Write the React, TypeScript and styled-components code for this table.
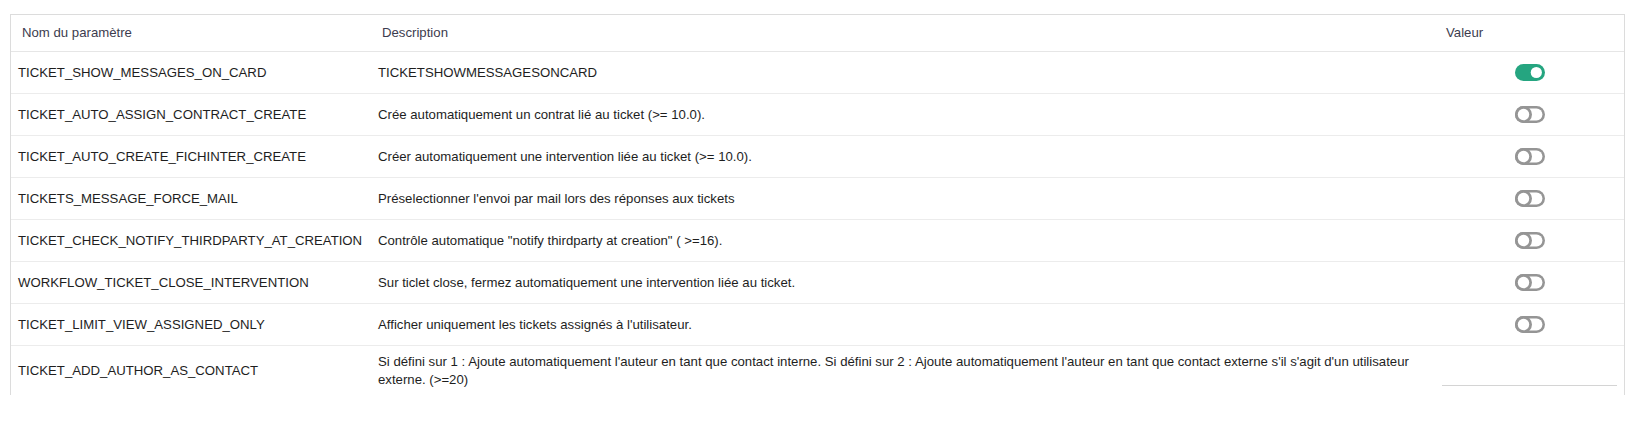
import React from "react";
import styled, { createGlobalStyle } from "styled-components";

const GlobalStyle = createGlobalStyle`
  html, body {
    margin: 0;
    padding: 0;
    background: #ffffff;
  }
  body {
    font-family: "Liberation Sans", Arial, sans-serif;
  }
`;

const Page = styled.div`
  padding: 14px 8px 0 10px;
`;

const TableFrame = styled.div`
  height: 381px;
  overflow: hidden;
  border: 1px solid #dcdcdc;
  border-bottom: none;
  box-sizing: border-box;
`;

const Row = styled.div<{ $head?: boolean }>`
  display: grid;
  grid-template-columns: 360px 1fr 189px;
  align-items: center;
  min-height: ${(p) => (p.$head ? "36px" : "41px")};
  border-bottom: 1px solid ${(p) => (p.$head ? "#e6e6e6" : "#ececec")};

  &:last-child {
    border-bottom: none;
  }
`;

const HeadCell = styled.div`
  padding: 0 11px;
  font-size: 13.2px;
  line-height: 18px;
  color: #3c3c4e;
`;

const Cell = styled.div<{ $center?: boolean }>`
  padding: 0 7px;
  font-size: 13.2px;
  line-height: 18px;
  color: #1e1e1e;
  display: ${(p) => (p.$center ? "flex" : "block")};
  justify-content: ${(p) => (p.$center ? "center" : "flex-start")};
  align-items: center;
`;

const TallCell = styled(Cell)`
  padding-top: 10px;
  padding-bottom: 10px;
`;

const ValueInput = styled.input`
  box-sizing: border-box;
  width: 100%;
  height: 30px;
  border: none;
  border-bottom: 1px solid #d4d4d4;
  background: transparent;
  outline: none;
  font-family: inherit;
  font-size: 13.2px;
`;

const ToggleSvg = styled.svg`
  display: block;
  width: 30px;
  height: 17px;
  cursor: pointer;
`;

const Toggle: React.FC<{ on: boolean }> = ({ on }) =>
  on ? (
    <ToggleSvg viewBox="0 0 30 17">
      <rect x="0" y="0" width="30" height="17" rx="8.5" fill="#25a580" />
      <circle cx="21.3" cy="8.5" r="5.6" fill="#ffffff" />
    </ToggleSvg>
  ) : (
    <ToggleSvg viewBox="0 0 30 17">
      <rect x="0" y="0" width="30" height="17" rx="8.5" fill="#959595" />
      <rect x="2.6" y="2.6" width="24.8" height="11.8" rx="5.9" fill="#ffffff" />
      <circle cx="8.5" cy="8.5" r="8.5" fill="#959595" />
      <circle cx="8.5" cy="8.5" r="5.7" fill="#ffffff" />
    </ToggleSvg>
  );

type Param = { name: string; desc: string; value: "on" | "off" | "input" };

const params: Param[] = [
  { name: "TICKET_SHOW_MESSAGES_ON_CARD", desc: "TICKETSHOWMESSAGESONCARD", value: "on" },
  { name: "TICKET_AUTO_ASSIGN_CONTRACT_CREATE", desc: "Crée automatiquement un contrat lié au ticket (>= 10.0).", value: "off" },
  { name: "TICKET_AUTO_CREATE_FICHINTER_CREATE", desc: "Créer automatiquement une intervention liée au ticket (>= 10.0).", value: "off" },
  { name: "TICKETS_MESSAGE_FORCE_MAIL", desc: "Préselectionner l'envoi par mail lors des réponses aux tickets", value: "off" },
  { name: "TICKET_CHECK_NOTIFY_THIRDPARTY_AT_CREATION", desc: "Contrôle automatique \"notify thirdparty at creation\" ( >=16).", value: "off" },
  { name: "WORKFLOW_TICKET_CLOSE_INTERVENTION", desc: "Sur ticlet close, fermez automatiquement une intervention liée au ticket.", value: "off" },
  { name: "TICKET_LIMIT_VIEW_ASSIGNED_ONLY", desc: "Afficher uniquement les tickets assignés à l'utilisateur.", value: "off" },
  {
    name: "TICKET_ADD_AUTHOR_AS_CONTACT",
    desc: "Si défini sur 1 : Ajoute automatiquement l'auteur en tant que contact interne. Si défini sur 2 : Ajoute automatiquement l'auteur en tant que contact externe s'il s'agit d'un utilisateur externe. (>=20)",
    value: "input",
  },
];

export default function App() {
  return (
    <Page>
      <GlobalStyle />
      <TableFrame>
        <Row $head>
          <HeadCell>Nom du paramètre</HeadCell>
          <HeadCell>Description</HeadCell>
          <HeadCell>Valeur</HeadCell>
        </Row>
        {params.map((p) => (
          <Row key={p.name}>
            <Cell>{p.name}</Cell>
            <Cell>{p.desc}</Cell>
            {p.value === "input" ? (
              <TallCell>
                <ValueInput type="text" defaultValue="" />
              </TallCell>
            ) : (
              <Cell $center>
                <Toggle on={p.value === "on"} />
              </Cell>
            )}
          </Row>
        ))}
      </TableFrame>
    </Page>
  );
}
